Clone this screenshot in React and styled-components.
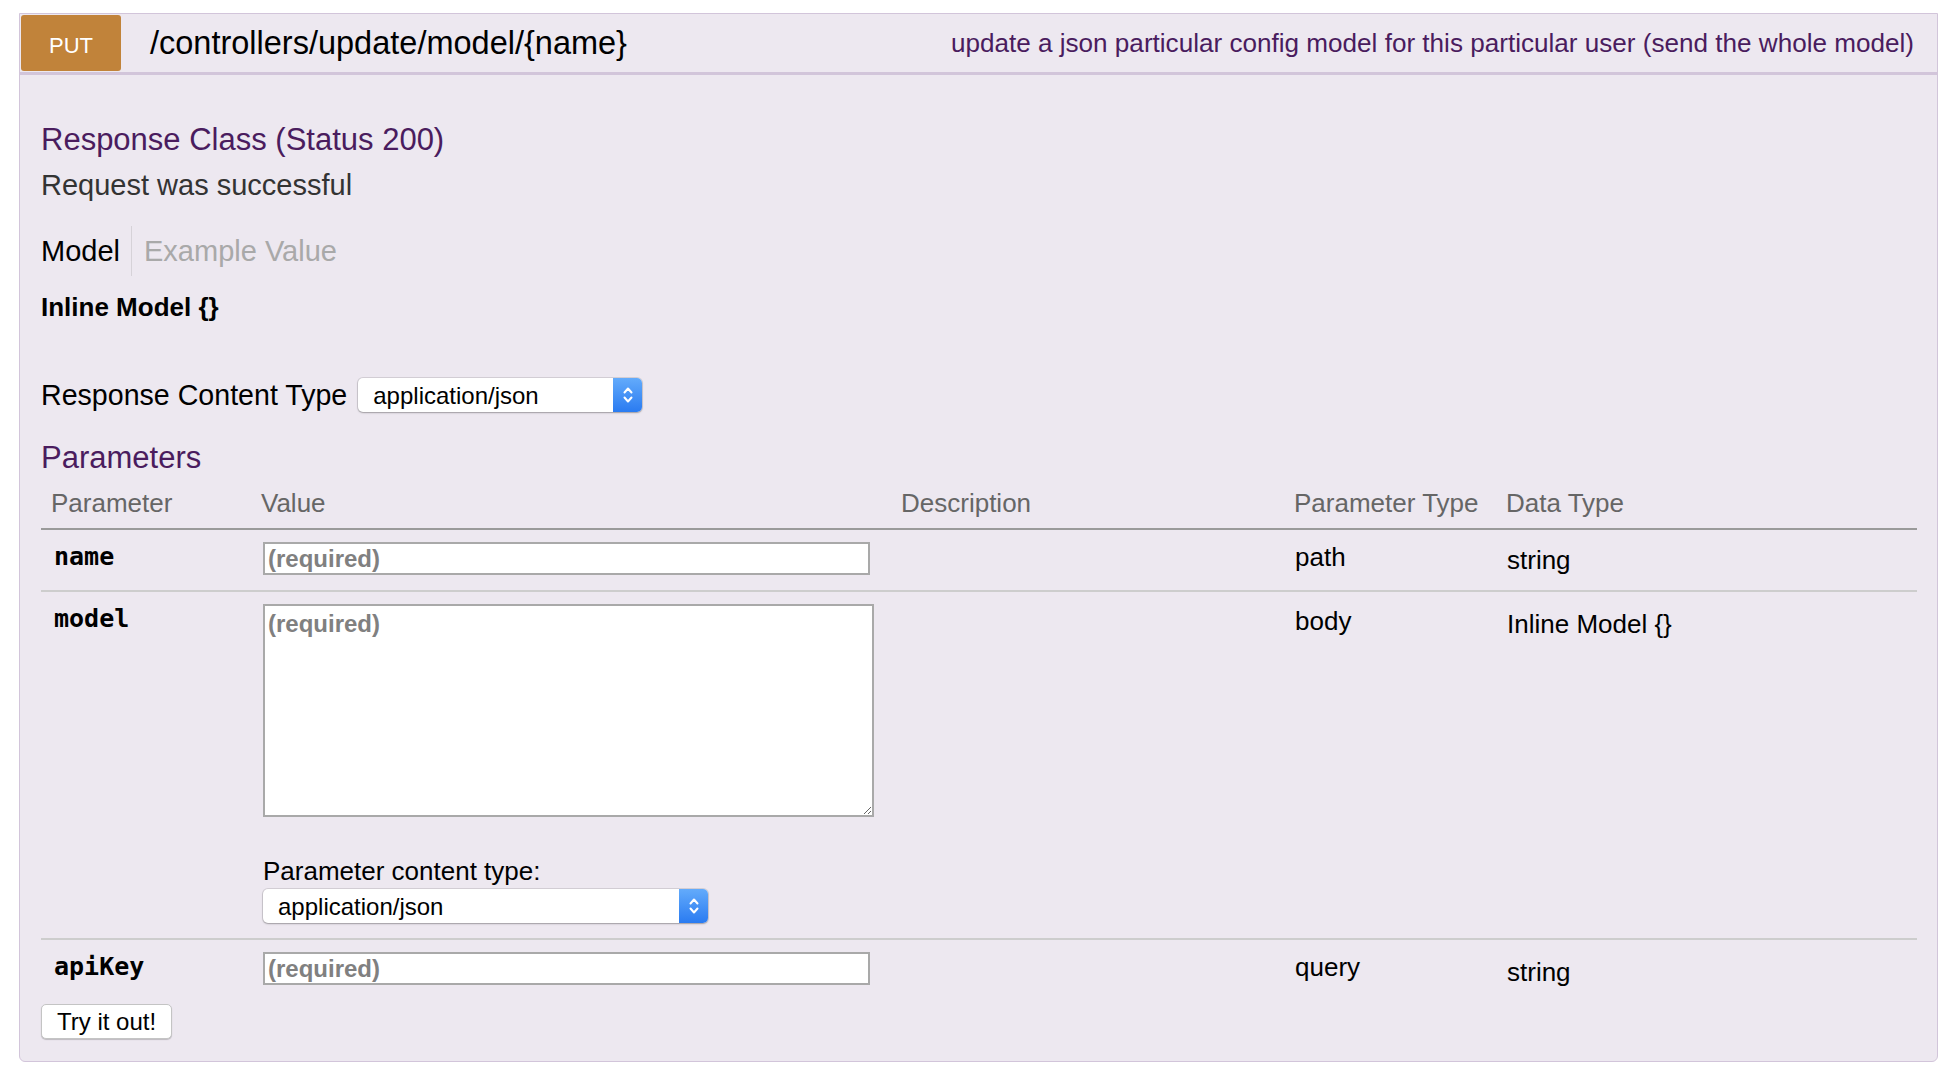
import React from "react";
import styled, { createGlobalStyle } from "styled-components";

const GlobalStyle = createGlobalStyle`
  body {
    margin: 0;
    background: #fff;
    font-family: "Liberation Sans", Arial, sans-serif;
    color: #000;
  }
`;

const Page = styled.div`
  padding: 13px 20px 0 19px;
`;

const Panel = styled.div`
  border: 1px solid #d2c5da;
  border-radius: 0 0 6px 6px;
  background: #ede8f0;
`;

const Header = styled.div`
  display: flex;
  align-items: center;
  padding: 1px;
  border-bottom: 3px solid #d2c5da;
`;

const Method = styled.span`
  display: flex;
  align-items: center;
  justify-content: center;
  box-sizing: border-box;
  width: 100px;
  height: 56px;
  padding-top: 6px;
  border-radius: 3px;
  background: #c1833a;
  color: #fff;
  font-size: 22px;
`;

const Path = styled.span`
  flex: 1;
  margin-left: 29px;
  font-size: 32.5px;
  color: #000;
`;

const Summary = styled.span`
  margin-right: 22px;
  font-size: 26.1px;
  color: #4a1c5e;
`;

const Content = styled.div`
  padding: 0 20px 22px 21px;
`;

const SectionTitle = styled.h4`
  margin: ${(p) => p.$top}px 0 0;
  font-size: 31px;
  line-height: 36px;
  font-weight: normal;
  color: #4a1c5e;
`;

const Note = styled.p`
  margin: 10px 0 0;
  font-size: 29px;
  line-height: 34px;
  color: #333;
`;

const Tabs = styled.div`
  display: flex;
  margin-top: 24px;
`;

const Tab = styled.span`
  padding: 8px ${(p) => (p.$active ? "11px" : "0")} 8px ${(p) => (p.$active ? "0" : "12px")};
  border-left: ${(p) => (p.$active ? "none" : "1px solid #d6d2d8")};
  font-size: 29px;
  line-height: 34px;
  color: ${(p) => (p.$active ? "#000" : "#a9a9a9")};
`;

const ModelName = styled.div`
  margin-top: 16px;
  font-size: 26px;
  line-height: 30px;
  font-weight: bold;
`;

const ContentTypeRow = styled.div`
  display: flex;
  align-items: center;
  gap: 11px;
  margin-top: 56px;
  font-size: 28.6px;
`;

const SelectBox = styled.div`
  display: flex;
  width: ${(p) => p.$w}px;
  height: 34px;
  border-radius: 5px;
  background: #fff;
  box-shadow: 0 0 0 1px rgba(0, 0, 0, 0.1), 0 1px 2px rgba(0, 0, 0, 0.25);
`;

const NativeSelect = styled.select`
  flex: 1;
  appearance: none;
  border: none;
  background: transparent;
  padding: 0 0 0 15px;
  font-family: "Liberation Sans", Arial, sans-serif;
  font-size: 24px;
  color: #000;
  outline: none;
`;

const SelectArrow = styled.span`
  display: flex;
  align-items: center;
  justify-content: center;
  width: 29px;
  border-radius: 0 5px 5px 0;
  background: linear-gradient(#63abfb, #2a7bf1);
`;

const Table = styled.div`
  margin-top: 12px;
`;

const HeadRow = styled.div`
  display: grid;
  grid-template-columns: 210px 640px 393px 212px 1fr;
  padding-bottom: 10px;
  border-bottom: 2px solid #9a9a9a;
`;

const HeadCell = styled.span`
  padding-left: 10px;
  font-size: 26px;
  line-height: 30px;
  color: #666;
`;

const Row = styled.div`
  display: grid;
  grid-template-columns: 210px 640px 393px 212px 1fr;
  align-items: start;
  padding: 12px 0 ${(p) => (p.$last ? 0 : 15)}px;
  border-bottom: ${(p) => (p.$last ? "none" : "2px solid #cdcdcd")};
`;

const ParamName = styled.span`
  padding-left: 13px;
  font-family: "DejaVu Sans Mono", "Liberation Mono", monospace;
  font-weight: bold;
  font-size: 25px;
  line-height: 30px;
`;

const ValueCell = styled.div`
  display: flex;
  flex-direction: column;
  align-items: flex-start;
  padding-left: 12px;
`;

const Cell = styled.span`
  padding: ${(p) => p.$drop || 0}px 0 0 11px;
  font-size: 26px;
  line-height: 30px;
`;

const fieldStyle = `
  box-sizing: border-box;
  border: 2px solid #a9a9a9;
  background: #fff;
  font-family: "Liberation Sans", Arial, sans-serif;
  font-size: 24px;
  color: #000;
  outline: none;
  &::placeholder {
    font-weight: bold;
    color: #808080;
  }
`;

const TextInput = styled.input`
  ${fieldStyle}
  width: 607px;
  height: 33px;
  padding: 0 3px;
`;

const TextArea = styled.textarea`
  ${fieldStyle}
  width: 611px;
  height: 213px;
  padding: 4px 3px;
  line-height: 28px;
`;

const FieldLabel = styled.label`
  margin-top: 39px;
  font-size: 26px;
  line-height: 30px;
`;

const FieldSelect = styled.div`
  margin-top: 3px;
`;

const TryButton = styled.button`
  margin-top: 17px;
  height: 35px;
  padding: 0 15px;
  border: 1px solid #c4c4c4;
  border-radius: 5px;
  background: #fff;
  box-shadow: 0 1px 1px rgba(0, 0, 0, 0.2);
  font-family: "Liberation Sans", Arial, sans-serif;
  font-size: 24px;
  color: #000;
`;

const Chevrons = () => (
  <svg width="12" height="22" viewBox="0 0 12 22">
    <path d="M2.5 8.5 L6 4.5 L9.5 8.5" fill="none" stroke="#fff" strokeWidth="2" strokeLinecap="round" strokeLinejoin="round" />
    <path d="M2.5 13.5 L6 17.5 L9.5 13.5" fill="none" stroke="#fff" strokeWidth="2" strokeLinecap="round" strokeLinejoin="round" />
  </svg>
);

const ContentTypeSelect = ({ width }) => (
  <SelectBox $w={width}>
    <NativeSelect defaultValue="application/json">
      <option value="application/json">application/json</option>
    </NativeSelect>
    <SelectArrow>
      <Chevrons />
    </SelectArrow>
  </SelectBox>
);

const App = () => {
  return (
    <Page>
      <GlobalStyle />
      <Panel>
        <Header>
          <Method>PUT</Method>
          <Path>/controllers/update/model/{"{name}"}</Path>
          <Summary>update a json particular config model for this particular user (send the whole model)</Summary>
        </Header>
        <Content>
          <SectionTitle $top={47}>Response Class (Status 200)</SectionTitle>
          <Note>Request was successful</Note>
          <Tabs>
            <Tab $active>Model</Tab>
            <Tab>Example Value</Tab>
          </Tabs>
          <ModelName>Inline Model {"{}"}</ModelName>

          <ContentTypeRow>
            <span>Response Content Type</span>
            <ContentTypeSelect width={284} />
          </ContentTypeRow>

          <SectionTitle $top={28}>Parameters</SectionTitle>
          <Table>
            <HeadRow>
              <HeadCell>Parameter</HeadCell>
              <HeadCell>Value</HeadCell>
              <HeadCell>Description</HeadCell>
              <HeadCell>Parameter Type</HeadCell>
              <HeadCell>Data Type</HeadCell>
            </HeadRow>
            <Row>
              <ParamName>name</ParamName>
              <ValueCell>
                <TextInput placeholder="(required)" />
              </ValueCell>
              <span />
              <Cell>path</Cell>
              <Cell $drop={3}>string</Cell>
            </Row>
            <Row>
              <ParamName>model</ParamName>
              <ValueCell>
                <TextArea placeholder="(required)" />
                <FieldLabel>Parameter content type:</FieldLabel>
                <FieldSelect>
                  <ContentTypeSelect width={445} />
                </FieldSelect>
              </ValueCell>
              <span />
              <Cell $drop={2}>body</Cell>
              <Cell $drop={5}>Inline Model {"{}"}</Cell>
            </Row>
            <Row $last>
              <ParamName>apiKey</ParamName>
              <ValueCell>
                <TextInput placeholder="(required)" />
              </ValueCell>
              <span />
              <Cell>query</Cell>
              <Cell $drop={5}>string</Cell>
            </Row>
          </Table>
          <TryButton>Try it out!</TryButton>
        </Content>
      </Panel>
    </Page>
  );
};

export default App;
